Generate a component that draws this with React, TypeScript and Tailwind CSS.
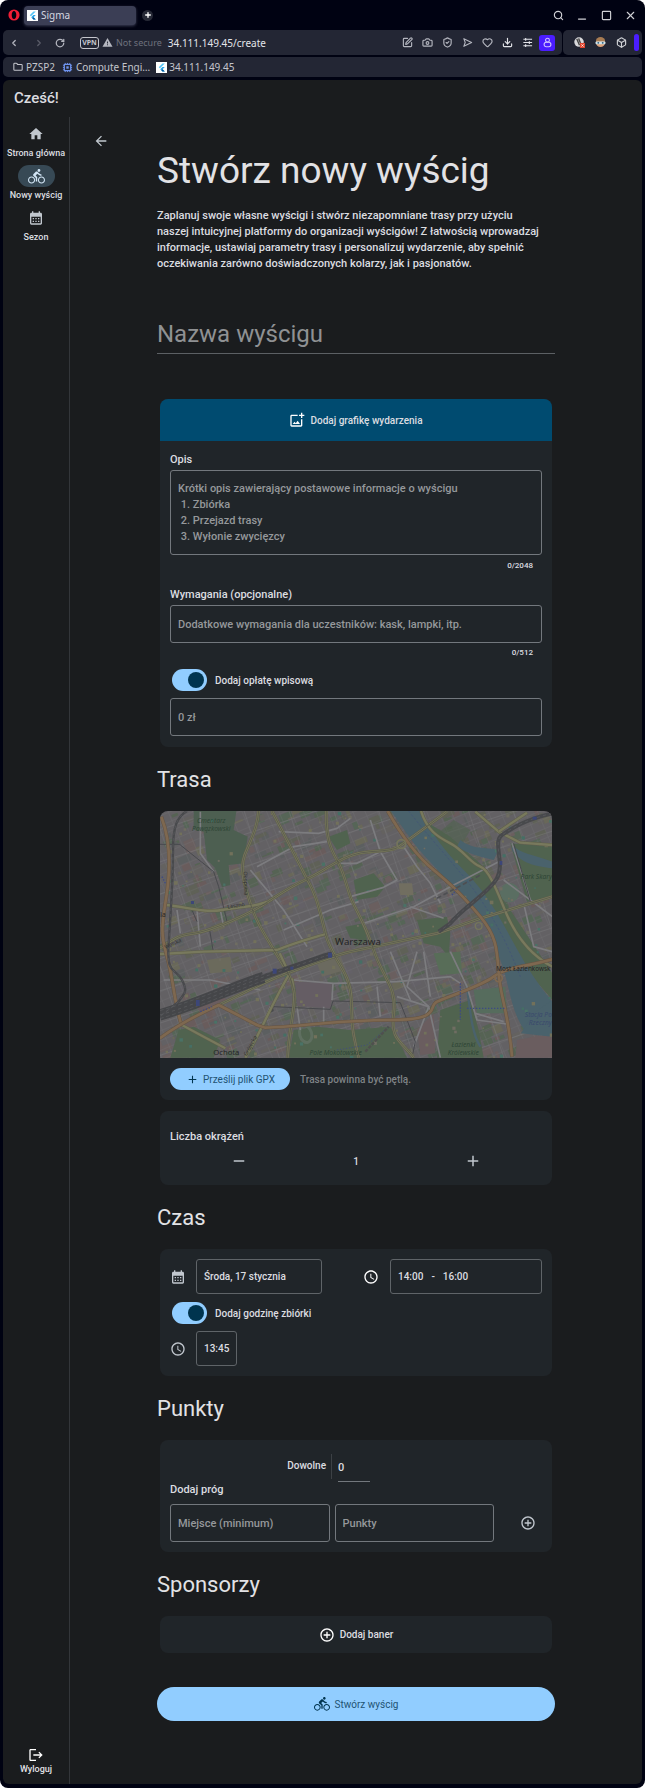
import type { ReactNode } from 'react';
import {
  MdAdd,
  MdAddCircleOutline,
  MdArrowBack,
  MdCalendarMonth,
  MdDirectionsBike,
  MdHome,
  MdLogout,
  MdOutlineAddPhotoAlternate,
  MdRemove,
  MdSchedule,
  MdWarning,
} from 'react-icons/md';
import {
  Box,
  Camera,
  ChevronLeft,
  ChevronRight,
  Download,
  Folder,
  Heart,
  Minus,
  Plus,
  RotateCw,
  Search,
  ShieldCheck,
  Square,
  SquarePen,
  X,
} from 'lucide-react';

/* ---------- browser chrome ---------- */

function FlutterLogo() {
  return (
    <svg viewBox="0 0 12 12" className="size-[11px] shrink-0">
      <rect width="12" height="12" fill="#fff" />
      <path d="M7 1.6h2.6L4.3 6.9 3 5.6z" fill="#54c5f8" />
      <path d="M7 5.5h2.6L7.2 7.9 9.6 10.3H7L4.6 7.9z" fill="#29a5e8" />
      <path d="M7.2 7.9 9.6 10.3H7L5.9 9.2z" fill="#01579b" />
    </svg>
  );
}

function OperaLogo() {
  return (
    <svg viewBox="0 0 12 12" className="size-3 shrink-0">
      <path
        fillRule="evenodd"
        fill="#f01d35"
        d="M6 .4a5.6 5.6 0 1 0 0 11.2A5.6 5.6 0 0 0 6 .4zm0 1.5c1.4 0 2.3 1.8 2.3 4.1S7.400 10.100 6 10.100 3.700 8.300 3.700 6 4.600 1.900 6 1.900z"
      />
    </svg>
  );
}

function ChipLogo() {
  return (
    <svg viewBox="0 0 12 12" className="size-[11px] shrink-0" fill="none" stroke="#6f93ee">
      <path d="M3.500 1v10M6 1v10M8.500 1v10M1 3.500h10M1 6h10M1 8.500h10" strokeWidth="1" />
      <rect x="2.500" y="2.500" width="7" height="7" rx="1" fill="#232634" strokeWidth="1.400" />
      <rect x="4.700" y="4.700" width="2.600" height="2.600" fill="#6f93ee" stroke="none" />
    </svg>
  );
}

function IconButton({ label, className, children }: { label: string; className: string; children: ReactNode }) {
  return (
    <button type="button" aria-label={label} className={`flex shrink-0 items-center justify-center ${className}`}>
      {children}
    </button>
  );
}

function TabStrip() {
  return (
    <div className="flex h-[30px] items-center pr-[3px] pl-2">
      <OperaLogo />
      <div className="ml-1 flex h-[19px] w-28 items-center gap-[3px] rounded-sm bg-[#3b3e55] pl-[3px] text-[#d5d7e0] shadow-[0_1px_3px_#3b3e55]">
        <FlutterLogo />
        <span>Sigma</span>
      </div>
      <IconButton label="Nowa karta" className="ml-[6px] size-[11px] rounded-full bg-[#262936] text-white">
        <Plus className="size-2" strokeWidth={4} />
      </IconButton>
      <div className="ml-auto flex text-[#d0d1d6]">
        <IconButton label="Szukaj" className="w-6">
          <Search className="size-[11px]" strokeWidth={2.5} />
        </IconButton>
        <IconButton label="Minimalizuj" className="w-6 pt-2">
          <Minus className="size-3" strokeWidth={2.5} />
        </IconButton>
        <IconButton label="Maksymalizuj" className="w-6">
          <Square className="size-[11px]" strokeWidth={2.5} />
        </IconButton>
        <IconButton label="Zamknij" className="w-6">
          <X className="size-[13px]" />
        </IconButton>
      </div>
    </div>
  );
}

function Toolbar() {
  return (
    <div className="flex h-[25px] gap-px">
      <div className="flex min-w-0 flex-1 items-center rounded-[5px] bg-[#232634] pr-[5px] pl-[5px] text-[#b4b6bf]">
        <IconButton label="Wstecz" className="w-3">
          <ChevronLeft className="size-[10px]" strokeWidth={3} />
        </IconButton>
        <IconButton label="Dalej" className="ml-[13px] w-3 text-[#5b5d69]">
          <ChevronRight className="size-[10px]" strokeWidth={3} />
        </IconButton>
        <IconButton label="Odśwież" className="ml-[9px] w-3">
          <RotateCw className="size-[10px]" strokeWidth={3} />
        </IconButton>
        <span className="ml-[14px] flex h-3 w-[19px] shrink-0 items-center justify-center rounded-[3px] border border-[#c4c5cc] text-[7px] font-bold text-[#c4c5cc]">
          VPN
        </span>
        <MdWarning className="ml-[3px] size-[11px] shrink-0" />
        <span className="ml-[3px] whitespace-nowrap text-[9px] text-[#6e717d]">Not secure</span>
        <span className="ml-[6px] whitespace-nowrap text-[#e4e5ea]">34.111.149.45/create</span>
        <div className="ml-auto flex items-center">
          <IconButton label="Notatka" className="w-5">
            <SquarePen className="size-[11px]" strokeWidth={2.5} />
          </IconButton>
          <IconButton label="Zrzut ekranu" className="w-5">
            <Camera className="size-[11px]" strokeWidth={2.5} />
          </IconButton>
          <IconButton label="Ochrona" className="w-5">
            <ShieldCheck className="size-[11px]" strokeWidth={2.5} />
          </IconButton>
          <IconButton label="Wyślij" className="w-5">
            <svg viewBox="0 0 12 12" className="size-[11px]" fill="none" stroke="currentColor" strokeLinejoin="round">
              <path d="M2 1.800 10.500 6 2 10.200 3.500 6z" strokeWidth="1.200" />
            </svg>
          </IconButton>
          <IconButton label="Ulubione" className="w-5">
            <Heart className="size-[11px]" strokeWidth={2.5} />
          </IconButton>
          <IconButton label="Pobrane" className="w-5 text-[#e4e5ea]">
            <Download className="size-[11px]" strokeWidth={2.5} />
          </IconButton>
          <IconButton label="Ustawienia" className="w-5 text-[#e4e5ea]">
            <svg viewBox="0 0 12 12" className="size-[11px]" fill="none" stroke="currentColor" strokeWidth="1.200">
              <path d="M1.500 2.500h9.500M1.500 6h9.500M1.500 9.500h9.500M4 1v3M8 4.500v3M4 8v3" />
            </svg>
          </IconButton>
          <IconButton label="Profil" className="mx-[2px] size-4 rounded-[3px] bg-[#4b1dff] text-[#cfc4ff]">
            <svg viewBox="0 0 12 12" className="size-[11px]" fill="none" stroke="currentColor" strokeWidth="1.200">
              <circle cx="6" cy="3.500" r="2.100" />
              <rect x="2.300" y="5.800" width="7.400" height="4.800" rx="2.300" />
            </svg>
          </IconButton>
        </div>
      </div>
      <div className="flex items-center rounded-[5px] bg-[#232634] pr-[3px] pl-[6px] text-[#d0d1d6]">
        <IconButton label="Blokada skryptów" className="w-[21px]">
          <svg viewBox="0 0 12 12" className="size-[11px]">
            <circle cx="5.500" cy="5.500" r="5.200" fill="#d9d9dc" />
            <path d="M3 2l3 7M5 1.500l2 5" stroke="#444" strokeWidth="1.500" />
            <rect x="6.500" y="6.500" width="5.500" height="5.500" fill="#e0452f" />
            <path d="M8 8l2.500 2.500M10.500 8 8 10.500" stroke="#fff" strokeWidth=".8" />
          </svg>
        </IconButton>
        <IconButton label="Rozszerzenie" className="w-[21px]">
          <svg viewBox="0 0 12 12" className="size-[11px]">
            <circle cx="6" cy="6" r="5" fill="#d9a07a" />
            <path d="M1 5a5 5 0 0 1 10 0z" fill="#a77b52" />
            <rect x=".5" y="4.800" width="11" height="3.200" rx="1.500" fill="#cfe4ec" />
            <circle cx="3.600" cy="6.400" r="1" fill="#2d5c7a" />
            <circle cx="8.400" cy="6.400" r="1" fill="#2d5c7a" />
          </svg>
        </IconButton>
        <IconButton label="Rozszerzenia" className="w-[21px]">
          <Box className="size-[11px]" strokeWidth={2.5} />
        </IconButton>
        <span className="ml-[2px] h-[17px] w-[5px] rounded-full bg-[#4b1dff]" />
      </div>
    </div>
  );
}

function BookmarksBar() {
  return (
    <nav aria-label="Zakładki" className="mt-[2px] flex h-5 items-center rounded-[5px] bg-[#232634] pl-[10px] text-[#c4c5cc]">
      <a href="#pzsp2" className="flex items-center gap-[3px]">
        <Folder className="size-[10px]" strokeWidth={2.5} />
        PZSP2
      </a>
      <a href="#compute" className="ml-[7px] flex items-center gap-[3px]">
        <ChipLogo />
        Compute Engi…
      </a>
      <a href="#app" className="ml-[6px] flex items-center gap-[2px]">
        <FlutterLogo />
        34.111.149.45
      </a>
    </nav>
  );
}

/* ---------- map ---------- */

function makeRandom(seed: number) {
  let s = seed;
  return () => {
    s = (s * 16807) % 2147483647;
    return s / 2147483647;
  };
}

const rnd = makeRandom(4711);
const blockTones = ['#695c5c', '#5f6157', '#566354', '#6a5f5f', '#646260', '#5c5f60', '#696859', '#566557', '#646167'];
const blocks = Array.from({ length: 760 }, () => ({
  x: 20 + rnd() * 1190,
  y: 25 + rnd() * 750,
  w: 8 + rnd() * 32,
  h: 6 + rnd() * 22,
  tone: blockTones[Math.floor(rnd() * blockTones.length)],
}));
const dots = Array.from({ length: 230 }, () => ({
  x: 30 + rnd() * 1170,
  y: 35 + rnd() * 735,
  s: 4 + rnd() * 7,
  tone: ['#72715b', '#4a7266', '#72715b', '#456f65', '#6f6d62'][Math.floor(rnd() * 5)],
}));

const railways = [
  'M28 645 C150 610 250 560 400 510 S500 475 545 462',
  'M110 33 C80 50 68 80 68 150 S62 330 55 430 S75 500 95 540 S100 580 85 605 L28 650',
  'M1206 40 C1120 60 1085 85 1055 105 S1065 190 1040 235 S940 320 900 370 L865 395',
];
const orangeRoads = [
  'M33 50 C60 120 62 200 48 290 S30 400 50 470 S70 600 92 670',
  'M28 715 C90 670 150 640 205 615 L320 675 L345 683 C450 680 560 660 720 660 S830 620 860 605 S990 560 1030 530 S1130 500 1206 478',
  'M712 33 C750 100 790 160 850 210 S940 290 990 350 S1040 450 1045 520 S1075 640 1085 770',
];
const yellowRoads = [
  'M325 33 C320 90 300 120 283 165 S285 260 300 310 S340 400 380 465 S420 530 430 570 S415 680 412 773',
  'M365 33 L470 237 C500 290 505 320 525 400 S600 510 603 600 S605 690 625 773',
  'M528 33 C525 130 550 160 565 190 S590 260 600 290 S640 360 670 450 S740 560 730 640 S750 720 790 773',
  'M28 445 C80 410 90 405 130 400 S260 360 320 325 S400 270 470 237 S580 160 660 155 S740 145 760 130 L890 35',
  'M45 315 C100 318 160 340 215 330 S320 320 350 305',
  'M28 462 L160 455 L380 450 C440 425 500 410 525 402',
  'M205 615 C280 580 340 545 415 518 S540 470 600 455 L860 400 L1000 352 L1206 290',
  'M812 33 C830 90 860 110 900 130 S960 190 990 200 S1050 300 1070 345 S1130 460 1206 500',
  'M285 773 C320 720 360 620 415 525',
  'M975 35 L1045 95 L1110 128 L1206 135',
  'M1045 95 L1130 38',
  'M85 670 L160 710 L225 745',
  'M430 570 L425 535',
  'M415 518 L388 460',
];
const whiteRoads = [
  'M385 95 L505 100 L560 85 L600 55',
  'M150 35 L150 160 L190 215',
  'M320 200 L430 140 L530 125',
  'M560 190 L620 190 L690 155 L660 60',
  'M600 290 L700 262 L740 240 L690 155',
  'M760 140 L800 200 L840 250 L870 310',
  'M625 305 L540 330 L400 390',
  'M300 210 L400 330 L470 440',
  'M640 370 L790 320 L900 260 L1045 185',
  'M780 320 L880 355',
  'M430 540 L550 550 L740 545 L900 530 L930 550',
  'M740 590 L835 620 L870 773',
  'M800 455 L770 560 L835 620 L790 740',
  'M820 455 L840 590',
  'M720 455 L780 600',
  'M548 550 L545 600',
  'M900 455 L950 560 L980 660 L1070 672',
  'M975 640 L1060 665',
  'M1060 240 L1206 350',
  'M1085 130 L1140 300',
  'M1120 310 L1150 440 L1206 455',
  'M40 540 L180 540 L330 570',
  'M360 620 L330 690 L300 740',
  'M440 620 L450 690 M520 620 L520 670 M680 560 L690 650',
  'M80 330 L90 400 M140 330 L150 440 M210 330 L220 380',
];

function CityMap() {
  return (
    <svg
      role="img"
      aria-label="Mapa Warszawy"
      viewBox="28 33 1178 741"
      preserveAspectRatio="xMidYMid slice"
      className="block aspect-[392/247] w-full"
    >
      <defs>
        <pattern id="streets" width="34" height="27" patternUnits="userSpaceOnUse" patternTransform="rotate(-23)">
          <path d="M0 0H34M0 0V27" stroke="#77777a" strokeWidth="3" fill="none" />
        </pattern>
        <pattern id="wide-streets" width="128" height="92" patternUnits="userSpaceOnUse" patternTransform="rotate(-18)">
          <path d="M0 0H128M0 0V92" stroke="#7b7b7e" strokeWidth="4" fill="none" />
        </pattern>
      </defs>
      <rect x="28" y="33" width="1178" height="741" fill="#636164" />
      <g>
        {blocks.map((b, i) => (
          <rect key={i} x={b.x} y={b.y} width={b.w} height={b.h} fill={b.tone} transform={`rotate(-22 ${b.x} ${b.y})`} />
        ))}
      </g>
      <rect x="28" y="33" width="1178" height="741" fill="url(#streets)" opacity=".5" />
      <rect x="28" y="33" width="1178" height="741" fill="url(#wide-streets)" opacity=".6" />

      <g fill="#50634f">
        <path d="M130 33H258L250 90 292 110 280 190 235 195 240 255 215 262 195 205 170 180 160 95 130 90z" fill="#4d5f51" />
        <path d="M610 240 670 220 705 260 680 290 620 300z" />
        <path d="M535 110 590 90 600 130 560 150z" />
        <path d="M585 380 640 370 650 420 600 415z" />
        <path d="M800 360 890 350 900 400 895 470 870 440 820 430z" />
        <path d="M850 460 930 455 935 520 870 525z" fill="#586d58" />
        <path d="M870 630 960 600 985 690 1000 773H860z" />
        <path d="M430 690 500 680 600 690 720 680 770 773H415z" />
        <path d="M1080 130 1206 140V290L1130 305z" />
        <path d="M820 60 900 110 1000 200 1060 300 1160 450 1206 520V600L1120 500 1040 380 960 240 850 130z" />
        <path d="M970 570 1065 560 1070 640 980 640z" fill="#566c5d" />
        <path d="M85 690 130 680 210 720 190 773H60z" />
        <path d="M850 110 910 60 960 90 930 140z" opacity=".6" />
      </g>
      <g fill="#6a5d5f">
        <path d="M435 545 545 550 542 625 500 622 440 618z" fill="#655d64" />
        <path d="M130 600 200 575 230 600 150 640z" />
        <path d="M1100 720 1206 700V773H1095z" />
        <path d="M800 690 850 640 855 760 810 765z" />
      </g>
      <path d="M170 480 240 470 245 515 180 520z" fill="#6b6a5c" />
      <path d="M500 490 570 470 585 510 515 530z" fill="#6b6a5f" />
      <path d="M745 250 785 250 790 285 750 285z" fill="#716e60" />

      <path
        d="M722 33H815C840 100 890 160 935 205S1010 290 1040 340 1110 470 1150 530 1200 590 1206 610V690L1130 700C1080 640 1080 560 1050 480S1000 350 950 300 830 180 790 130z"
        fill="#4a626c"
      />
      <path d="M1150 640 1206 600V710L1112 700z" fill="#4a626c" />
      <path d="M1085 135C1110 160 1150 165 1206 185V205C1160 200 1110 190 1085 150z" fill="#4a626c" />
      <path d="M930 120C970 150 1000 140 1045 150L1030 180C990 170 950 160 920 140z" fill="#4a626c" />
      <circle cx="1078" cy="278" r="29" fill="#5a6e62" />
      <path
        d="M775 33C850 130 930 210 985 290S1075 440 1110 530"
        fill="none"
        stroke="#435378"
        strokeWidth="2"
        strokeDasharray="7 6"
      />
      <path d="M950 560C960 640 965 700 990 740" fill="none" stroke="#4a626c" strokeWidth="7" />
      <ellipse cx="466" cy="702" rx="18" ry="26" fill="none" stroke="#5f6f60" strokeWidth="9" transform="rotate(-15 466 702)" />

      <g>
        {dots.map((d, i) => (
          <rect key={i} x={d.x} y={d.y} width={d.s} height={d.s} fill={d.tone} />
        ))}
      </g>

      <g fill="none" strokeLinejoin="round">
        {whiteRoads.map((d) => (
          <path key={d} d={d} stroke="#7c7c7f" strokeWidth="5" />
        ))}
        <path d="M90 135 L190 215 L205 260 L230 365 M28 133H90" stroke="#48494d" strokeWidth="3" />
        <path d="M352 640 L370 620 L540 628 L548 603 L750 608 L795 725 L785 773" stroke="#48494d" strokeWidth="3" />
        <path d="M352 640 L368 632 L365 618" stroke="#48494d" strokeWidth="4" />
        <path d="M1090 130 L1140 305 M178 390 L188 450 M125 330 L140 365" stroke="#48494d" strokeWidth="3" />
        {yellowRoads.map((d) => (
          <g key={d}>
            <path d={d} stroke="#5f5f4b" strokeWidth="10" />
            <path d={d} stroke="#78795d" strokeWidth="7" />
          </g>
        ))}
        {yellowRoads.slice(0, 4).map((d) => (
          <path key={d} d={d} stroke="#4f5048" strokeWidth="2" />
        ))}
        <path d={yellowRoads[6]} stroke="#4f5048" strokeWidth="2" />
        {orangeRoads.map((d) => (
          <g key={d}>
            <path d={d} stroke="#655443" strokeWidth="11" />
            <path d={d} stroke="#7e6850" strokeWidth="8" />
          </g>
        ))}
        <path d={railways[0]} stroke="#454649" strokeWidth="16" />
        <path d="M28 645 C150 610 250 560 340 532" stroke="#454649" strokeWidth="34" />
        <path d={railways[1]} stroke="#48494c" strokeWidth="7" />
        <path d={railways[2]} stroke="#48494c" strokeWidth="12" />
        {railways.map((d) => (
          <path key={d} d={d} stroke="#56575a" strokeWidth="3" strokeDasharray="10 9" />
        ))}
        <path d="M28 632 C150 598 250 550 400 503 M28 656 C150 620 250 572 400 520" stroke="#5b5c5f" strokeWidth="2" strokeDasharray="12 7" />
        <circle cx="753" cy="132" r="13" stroke="#74755b" strokeWidth="5" />
        <circle cx="985" cy="378" r="10" stroke="#74755b" strokeWidth="4" />
        <circle cx="1045" cy="534" r="11" stroke="#7e6850" strokeWidth="5" />
        <path d="M860 295 L990 225" stroke="#4e4f52" strokeWidth="5" strokeDasharray="14 8" />
        <path d="M560 750 L650 735 L715 680" stroke="#435078" strokeWidth="3" strokeDasharray="4 5" />
        <path d="M645 755 L715 680" stroke="#4f504e" strokeWidth="7" strokeDasharray="10 4" />
        <path d="M930 550V660M905 285 920 265M35 230 45 250M150 635 185 620M950 625H1065" stroke="#3c4985" strokeWidth="4" strokeDasharray="4 5" />
      </g>
      <g fill="#3c4678">
        <rect x="533" y="458" width="12" height="15" />
        <rect x="367" y="506" width="12" height="15" />
        <rect x="137" y="600" width="11" height="18" />
        <rect x="420" y="500" width="9" height="9" />
        <rect x="1147" y="50" width="12" height="9" />
        <rect x="122" y="303" width="9" height="9" />
        <rect x="1048" y="183" width="8" height="12" />
      </g>

      <g fontFamily="'Noto Sans', sans-serif" textAnchor="middle">
        <g fontStyle="italic" fontSize="20" fill="#2f4636">
          <text x="183" y="70">Cmentarz</text>
          <text x="183" y="94">Powązkowski</text>
          <text x="1158" y="237">Park Skary</text>
          <text x="556" y="765">Pole Mokotowskie</text>
          <text x="939" y="742">Łazienki</text>
          <text x="939" y="766">Królewskie</text>
        </g>
        <g fontStyle="italic" fontSize="20" fill="#3b4a6c">
          <text x="1164" y="651">Stacja Po</text>
          <text x="1170" y="675">Rzeczny</text>
        </g>
        <g fill="#242426">
          <text x="623" y="434" fontSize="29">Warszawa</text>
          <text x="228" y="764" fontSize="23">Ochota</text>
          <text x="38" y="352" fontSize="20">la</text>
          <text x="1119" y="512" fontSize="19">Most Łazienkowsk</text>
        </g>
        <g fill="#303130" fontSize="16">
          <text transform="translate(258 322) rotate(-10)">Leszno</text>
          <text transform="translate(70 436) rotate(-25)">Wolska</text>
          <text transform="translate(281 250) rotate(88)">Okopowa</text>
          <text transform="translate(305 740) rotate(-62)">Grójecka</text>
        </g>
      </g>
    </svg>
  );
}

/* ---------- app ---------- */

function RailItem({ icon, label, active = false }: { icon: ReactNode; label: string; active?: boolean }) {
  return (
    <a
      href="#nav"
      aria-current={active ? 'page' : undefined}
      className="flex h-[42px] flex-col items-center text-[9px] leading-3 font-medium whitespace-nowrap text-[#dcdee1]"
    >
      <span
        className={
          active
            ? 'flex h-[22px] w-[37px] items-center justify-center rounded-full bg-[#374955] text-[#d2e5f5]'
            : 'flex h-[22px] w-[37px] items-center justify-center text-[#c1c7ce]'
        }
      >
        {icon}
      </span>
      <span className="mt-[2px]">{label}</span>
    </a>
  );
}

function Card({ className = '', children }: { className?: string; children: ReactNode }) {
  return <div className={`mx-[3px] overflow-hidden rounded-lg bg-[#202529] ${className}`}>{children}</div>;
}

function SectionTitle({ children }: { children: ReactNode }) {
  return <h2 className="flex h-16 items-center text-[22px] text-[#e2e2e5]">{children}</h2>;
}

function Toggle({ id, label }: { id: string; label: string }) {
  return (
    <div className="flex h-[22px] items-center gap-2 pl-[2px]">
      <input
        id={id}
        type="checkbox"
        role="switch"
        defaultChecked
        className="flex h-[22px] w-[35px] appearance-none items-center rounded-full bg-[#40474d] px-[3px] before:size-4 before:rounded-full before:bg-[#8b9198] checked:justify-end checked:bg-[#91cdff] checked:before:bg-[#00344f]"
      />
      <label htmlFor={id} className="text-[10px] font-medium">
        {label}
      </label>
    </div>
  );
}

export default function App() {
  return (
    <div className="min-h-screen bg-white">
      <div className="flex min-h-screen flex-col rounded-lg bg-[#000212] px-[3px] pb-1 font-['Roboto',sans-serif]">
        <header className="-mx-[3px] font-['Noto_Sans',sans-serif] text-[10px] leading-3">
          <TabStrip />
          <div className="mx-[3px]">
            <Toolbar />
            <BookmarksBar />
          </div>
        </header>

        <div className="mt-[3px] flex flex-1 flex-col rounded-md bg-[#1a1c1e] text-[#dcdde0]">
          <div className="flex h-[37px] items-center pl-[11px] text-[15px] font-medium">Cześć!</div>
          <div className="flex flex-1">
            <nav aria-label="Menu" className="flex w-[67px] shrink-0 flex-col border-r border-[#33363a] pt-[6px] pb-[9px]">
              <RailItem icon={<MdHome className="size-4" />} label="Strona główna" />
              <RailItem active icon={<MdDirectionsBike className="size-[17px]" />} label="Nowy wyścig" />
              <RailItem icon={<MdCalendarMonth className="size-4" />} label="Sezon" />
              <button
                type="button"
                className="mt-auto flex flex-col items-center text-[9px] leading-3 font-medium text-[#e2e2e5]"
              >
                <MdLogout className="size-4 text-white" />
                Wyloguj
              </button>
            </nav>

            <main className="grid min-w-0 flex-1 grid-cols-[1fr_minmax(0,398px)_1fr] pb-[63px]">
              <div className="pt-4 pl-[23px]">
                <button type="button" aria-label="Wróć" className="block text-[#c1c7ce]">
                  <MdArrowBack className="size-4" />
                </button>
              </div>

              <form className="min-w-0 pt-[29px]" onSubmit={(e) => e.preventDefault()}>
                <h1 className="text-[37px] leading-[50px] text-[#e2e2e5]">Stwórz nowy wyścig</h1>
                <p className="mt-3 text-[11px] leading-4 font-medium">
                  Zaplanuj swoje własne wyścigi i stwórz niezapomniane trasy przy użyciu
                  <br />
                  naszej intuicyjnej platformy do organizacji wyścigów! Z łatwością wprowadzaj
                  <br />
                  informacje, ustawiaj parametry trasy i personalizuj wydarzenie, aby spełnić oczekiwania zarówno
                  doświadczonych kolarzy, jak i pasjonatów.
                </p>
                <input
                  type="text"
                  aria-label="Nazwa wyścigu"
                  placeholder="Nazwa wyścigu"
                  className="mt-[43px] block h-[39px] w-full border-b border-[#5c6064] bg-transparent text-2xl outline-none placeholder:text-[#8f9193]"
                />

                <Card className="mt-[45px]">
                  <button
                    type="button"
                    className="flex h-[42px] w-full items-center justify-center gap-[5px] bg-[#004b70] text-[10px] font-medium"
                  >
                    <MdOutlineAddPhotoAlternate className="size-4 text-white" />
                    Dodaj grafikę wydarzenia
                  </button>
                  <div className="px-[10px] pt-[11px] pb-[11px]">
                    <label htmlFor="opis" className="block text-[11px] leading-4 font-medium">
                      Opis
                    </label>
                    <textarea
                      id="opis"
                      placeholder={
                        'Krótki opis zawierający postawowe informacje o wyścigu\n 1. Zbiórka\n 2. Przejazd trasy\n 3. Wyłonie zwycięzcy'
                      }
                      className="mt-[2px] block h-[85px] w-full resize-none overflow-hidden rounded-[3px] border border-[#73787d] bg-transparent px-[7px] py-[10px] text-[11px] leading-4 font-medium outline-none placeholder:text-[#95989b]"
                    />
                    <p className="mt-[5px] pr-[9px] text-right text-[8px] leading-3 font-medium">0/2048</p>
                    <label htmlFor="wymagania" className="mt-[15px] block text-[11px] leading-4 font-medium">
                      Wymagania (opcjonalne)
                    </label>
                    <input
                      id="wymagania"
                      type="text"
                      placeholder="Dodatkowe wymagania dla uczestników: kask, lampki, itp."
                      className="mt-[2px] block h-[38px] w-full rounded-[3px] border border-[#73787d] bg-transparent px-[7px] text-[11px] font-medium outline-none placeholder:text-[#95989b]"
                    />
                    <p className="mt-1 mb-[10px] pr-[9px] text-right text-[8px] leading-3 font-medium">0/512</p>
                    <Toggle id="oplata" label="Dodaj opłatę wpisową" />
                    <input
                      type="text"
                      aria-label="Opłata wpisowa"
                      placeholder="0 zł"
                      className="mt-[7px] block h-[38px] w-full rounded-[3px] border border-[#73787d] bg-transparent px-[7px] text-[11px] font-medium outline-none placeholder:text-[#95989b]"
                    />
                  </div>
                </Card>

                <SectionTitle>Trasa</SectionTitle>
                <Card>
                  <CityMap />
                  <div className="flex h-[42px] items-center px-[10px]">
                    <button
                      type="button"
                      className="flex h-[22px] items-center gap-1 rounded-full bg-[#91cdff] pr-[15px] pl-4 text-[10px] text-[#1f5373]"
                    >
                      <MdAdd className="size-[13px] text-[#00344f]" />
                      Prześlij plik GPX
                    </button>
                    <span className="ml-[10px] text-[10px] font-medium text-[#7f8386]">Trasa powinna być pętlą.</span>
                  </div>
                </Card>
                <Card className="mt-[11px] h-[74px] px-[10px] pt-[18px]">
                  <div className="text-[11px] leading-4 font-medium">Liczba okrążeń</div>
                  <div className="grid h-8 grid-cols-[1fr_96px_1fr] place-items-center">
                    <button type="button" aria-label="Mniej okrążeń" className="text-[#c1c7ce]">
                      <MdRemove className="size-[18px]" />
                    </button>
                    <output className="text-[10px] font-medium">1</output>
                    <button type="button" aria-label="Więcej okrążeń" className="text-[#c1c7ce]">
                      <MdAdd className="size-[18px]" />
                    </button>
                  </div>
                </Card>

                <SectionTitle>Czas</SectionTitle>
                <Card className="px-[10px] pt-[10px] pb-[10px]">
                  <div className="flex items-center">
                    <MdCalendarMonth className="size-4 shrink-0 text-[#c1c7ce]" />
                    <button
                      type="button"
                      className="ml-[10px] h-[35px] w-[126px] rounded-[3px] border border-[#5f6468] px-[7px] text-left text-[10px] font-medium"
                    >
                      Środa, 17 stycznia
                    </button>
                    <MdSchedule className="ml-auto size-4 shrink-0 text-white" />
                    <button
                      type="button"
                      className="ml-[11px] flex h-[35px] w-[152px] items-center gap-2 rounded-[3px] border border-[#5f6468] px-[7px] text-[10px] font-medium"
                    >
                      <span>14:00</span>
                      <span>-</span>
                      <span>16:00</span>
                    </button>
                  </div>
                  <div className="mt-2 mb-[7px]">
                    <Toggle id="zbiorka" label="Dodaj godzinę zbiórki" />
                  </div>
                  <div className="flex items-center">
                    <MdSchedule className="size-4 shrink-0 text-[#c1c7ce]" />
                    <button
                      type="button"
                      className="ml-[10px] h-[35px] rounded-[3px] border border-[#5f6468] px-[7px] text-[10px] font-medium"
                    >
                      13:45
                    </button>
                  </div>
                </Card>

                <SectionTitle>Punkty</SectionTitle>
                <Card className="px-[10px] pt-[14px] pb-[10px]">
                  <div className="grid h-7 grid-cols-[156px_minmax(0,1fr)] items-start">
                    <label htmlFor="dowolne" className="text-right text-[10px] leading-6 font-medium">
                      Dowolne
                    </label>
                    <div className="ml-[5px] flex">
                      <span className="mr-[6px] h-[25px] w-px bg-[#3c4145]" />
                      <input
                        id="dowolne"
                        type="text"
                        defaultValue="0"
                        className="h-[28px] w-8 border-b border-[#73787d] bg-transparent text-[11px] font-medium outline-none"
                      />
                    </div>
                  </div>
                  <div className="text-[11px] leading-4 font-medium">Dodaj próg</div>
                  <div className="mt-[6px] flex items-center gap-[5px]">
                    <input
                      type="text"
                      aria-label="Miejsce (minimum)"
                      placeholder="Miejsce (minimum)"
                      className="h-[38px] min-w-0 flex-1 rounded-[3px] border border-[#73787d] bg-transparent px-[7px] text-[11px] font-medium outline-none placeholder:text-[#95989b]"
                    />
                    <input
                      type="text"
                      aria-label="Punkty"
                      placeholder="Punkty"
                      className="h-[38px] min-w-0 flex-1 rounded-[3px] border border-[#73787d] bg-transparent px-[7px] text-[11px] font-medium outline-none placeholder:text-[#95989b]"
                    />
                    <button type="button" aria-label="Dodaj próg" className="ml-[21px] pr-[6px] text-[#c1c7ce]">
                      <MdAddCircleOutline className="size-4" />
                    </button>
                  </div>
                </Card>

                <SectionTitle>Sponsorzy</SectionTitle>
                <Card>
                  <button type="button" className="flex h-[37px] w-full items-center justify-center gap-[5px] text-[10px] font-medium">
                    <MdAddCircleOutline className="size-4 text-white" />
                    Dodaj baner
                  </button>
                </Card>

                <button
                  type="submit"
                  className="mt-[34px] flex h-[34px] w-full items-center justify-center gap-[5px] rounded-full bg-[#91cdff] text-[10px] text-[#1f5373]"
                >
                  <MdDirectionsBike className="size-4 text-[#00344f]" />
                  Stwórz wyścig
                </button>
              </form>
              <div />
            </main>
          </div>
        </div>
      </div>
    </div>
  );
}
